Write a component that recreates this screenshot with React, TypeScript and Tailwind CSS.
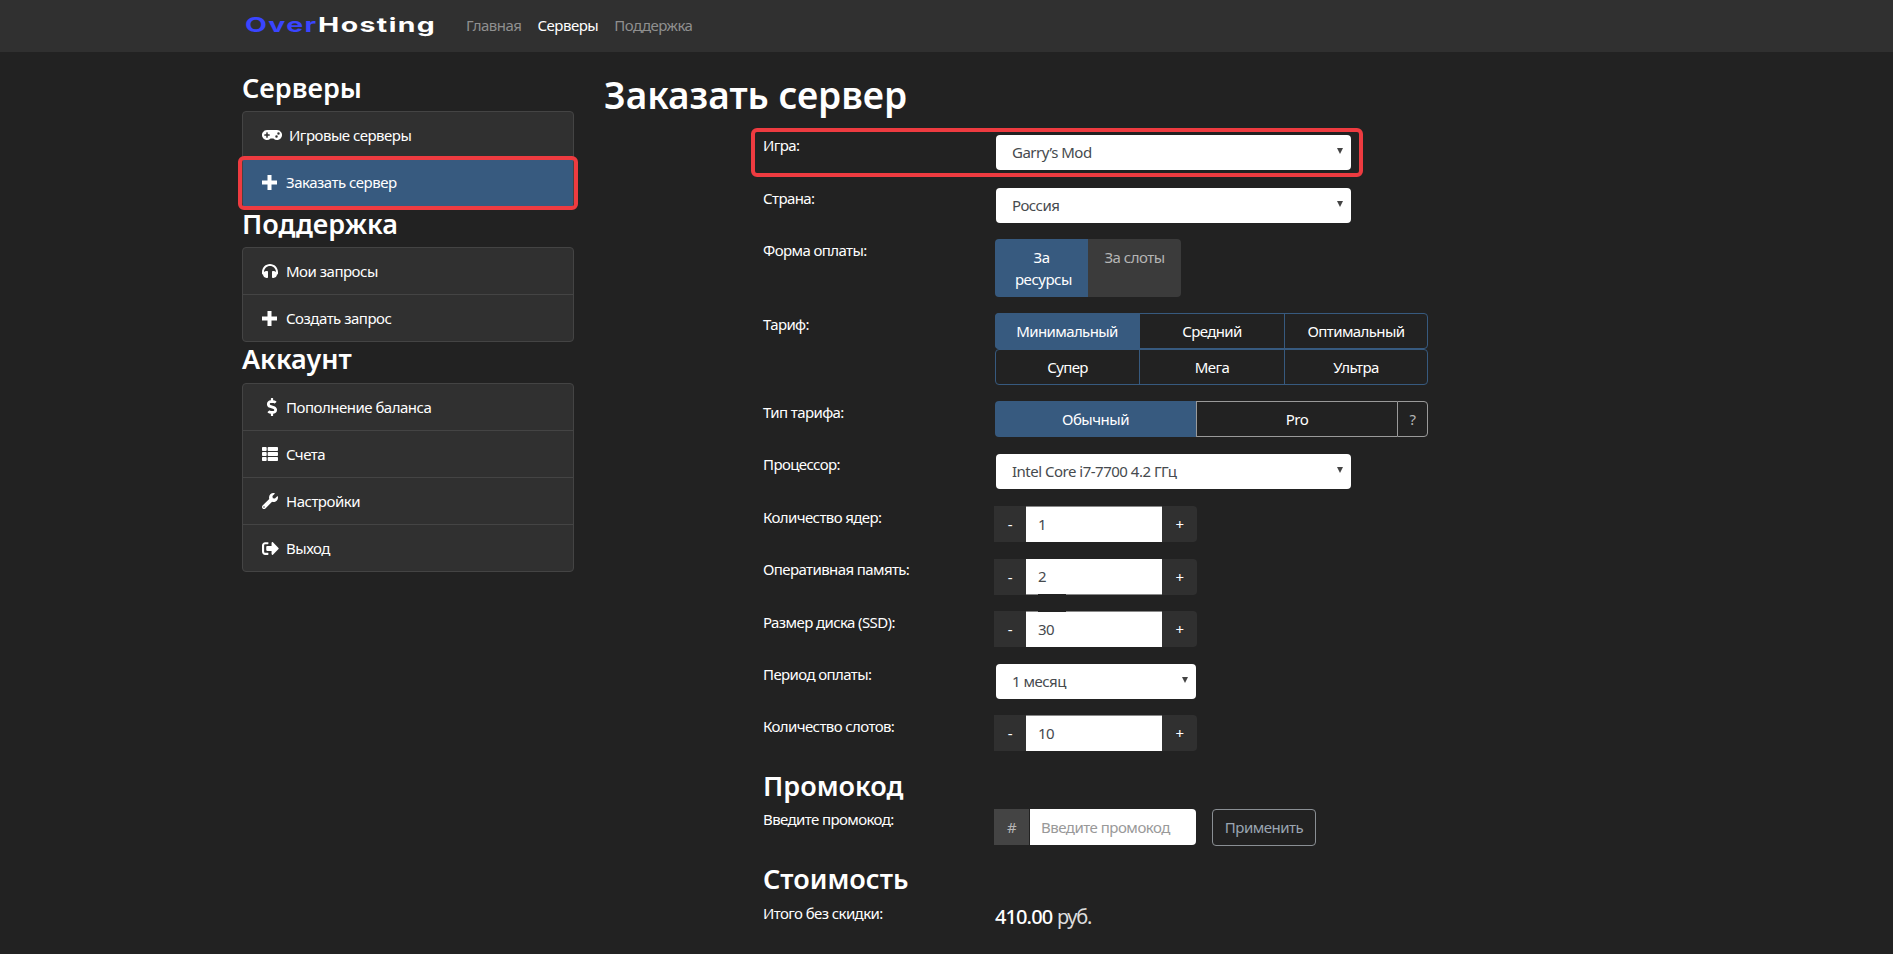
import type { ReactNode } from "react";
import { FaDollarSign, FaGamepad, FaHeadphones, FaSignOutAlt, FaThList, FaWrench } from "react-icons/fa";

const font = "font-['Noto_Sans',sans-serif]";

function PlusIcon() {
  return (
    <svg viewBox="0 0 15 15" className="h-[15px] w-[15px] fill-white">
      <path d="M5.5 0h4v5.5H15v4H9.5V15h-4V9.5H0v-4h5.5z" />
    </svg>
  );
}

const groups = [
  {
    title: "Серверы",
    heading: "h-[40px]",
    items: [
      { label: "Игровые серверы", icon: <FaGamepad className="h-[20px] w-[20px]" />, wide: true },
      { label: "Заказать сервер", icon: <PlusIcon />, active: true },
    ],
  },
  {
    title: "Поддержка",
    heading: "h-[40px]",
    items: [
      { label: "Мои запросы", icon: <FaHeadphones className="h-[16px] w-[16px]" /> },
      { label: "Создать запрос", icon: <PlusIcon /> },
    ],
  },
  {
    title: "Аккаунт",
    heading: "h-[41px]",
    items: [
      { label: "Пополнение баланса", icon: <FaDollarSign className="ml-[1px] h-[18px] w-[18px]" /> },
      { label: "Счета", icon: <FaThList className="h-[16px] w-[16px]" /> },
      { label: "Настройки", icon: <FaWrench className="h-[16px] w-[16px]" /> },
      { label: "Выход", icon: <FaSignOutAlt className="h-[17px] w-[17px]" /> },
    ],
  },
];

function Sidebar() {
  return (
    <aside className="w-[332px] shrink-0 pt-[19px]">
      {groups.map((group) => (
        <div key={group.title}>
          <h4 className={`text-[27px] leading-[34px] font-semibold tracking-normal text-white ${group.heading}`}>{group.title}</h4>
          <div className="rounded border border-[#444] bg-[#303030]">
            {group.items.map((item, i) => (
              <a
                key={item.label}
                className={`relative flex items-center px-[19px] text-[15px] text-white ${
                  i > 0 ? "border-t border-[#444]" : ""
                } ${i === 0 ? "h-[46px]" : item.active ? "h-[48px] bg-[#375a7f]" : "h-[47px]"}`}
              >
                <span className={`flex ${item.wide ? "w-[27px]" : "w-[24px]"}`}>{item.icon}</span>
                {item.label}
                {item.active && (
                  <span className="absolute inset-x-[-5px] top-[-3px] bottom-[-4px] rounded-[6px] border-[4px] border-[#ee3b40]" />
                )}
              </a>
            ))}
          </div>
        </div>
      ))}
    </aside>
  );
}

function Row({
  label,
  className = "",
  labelClass = "",
  children,
}: {
  label: string;
  className?: string;
  labelClass?: string;
  children: ReactNode;
}) {
  return (
    <div className={`flex ${className}`}>
      <label className={`h-[22px] w-[232px] shrink-0 text-[15px] leading-[22px] tracking-[-0.6px] text-white ${labelClass}`}>
        {label}
      </label>
      {children}
    </div>
  );
}

function NativeSelect({ value, width }: { value: string; width: string }) {
  return (
    <div className={`relative ml-[1px] ${width}`}>
      <select
        defaultValue={value}
        className="h-[35px] w-full appearance-none rounded bg-white px-[16px] text-[15px] text-[#464a4e]"
      >
        <option>{value}</option>
      </select>
      <svg viewBox="0 0 6 6" className="absolute top-[13px] right-[8px] h-[6px] w-[6px] fill-[#444]">
        <path d="M0 0h6L3 6z" />
      </svg>
    </div>
  );
}

function Spinner({ value, border = "border-t", notch = "" }: { value: string; border?: string; notch?: string }) {
  return (
    <div className="relative ml-[-1px] flex h-[36px] w-[203px] overflow-hidden rounded-r bg-[#303030] text-[15px] text-white">
      <span className="flex w-[32px] items-center justify-center">-</span>
      <input
        defaultValue={value}
        className={`w-[136px] border-[#888] bg-white px-[12px] text-[15px] text-[#464a4e] ${border}`}
      />
      <span className="flex w-[35px] items-center justify-center">+</span>
      {notch && <span className={`absolute left-[44px] h-[1px] w-[28px] bg-[#222] ${notch}`} />}
    </div>
  );
}

function Tariffs() {
  const rows = [
    ["Минимальный", "Средний", "Оптимальный"],
    ["Супер", "Мега", "Ультра"],
  ];
  return (
    <div className="w-[434px]">
      {rows.map((row, r) => (
        <div key={r} className="grid h-[36px] grid-cols-[143px_145px_1fr] rounded border border-[#375a7f]">
          {row.map((name, i) => (
            <span
              key={name}
              className={`flex items-center justify-center text-[15px] tracking-[-0.6px] text-white ${
                i > 0 ? "border-l border-[#375a7f]" : ""
              } ${name === "Минимальный" ? "m-[-1px] mr-0 rounded-l bg-[#375a7f]" : ""}`}
            >
              {name}
            </span>
          ))}
        </div>
      ))}
    </div>
  );
}

export default function App() {
  return (
    <div className={`h-[954px] overflow-hidden bg-[#222] tracking-[-0.5px] ${font}`}>
      <nav className="flex h-[52px] items-center bg-[#303030] pb-[2px] pl-[245px]">
        <span className="mr-[31px] w-[190px] font-['Inter',sans-serif] text-[20px] leading-none font-bold tracking-[1px] whitespace-nowrap">
          <span className="inline-block origin-left scale-x-[1.42]">
            <span className="text-[#3a45ff]">Over</span>
            <span className="text-white">Hosting</span>
          </span>
        </span>
        <div className="flex gap-[16px] text-[15px]">
          <a className="text-[#8f8f8f]">Главная</a>
          <a className="text-white">Серверы</a>
          <a className="text-[#8f8f8f]">Поддержка</a>
        </div>
      </nav>

      <div className="flex pl-[242px]">
        <Sidebar />
        <main className="ml-[30px] flex-1">
          <h1 className="mt-[16px] h-[67px] text-[37px] leading-[54px] font-semibold tracking-normal text-white">
            Заказать сервер
          </h1>
          <form className="ml-[159px] w-[665px]">
            <Row label="Игра:" labelClass="mt-[-1px]" className="relative mb-[18px]">
              <NativeSelect value="Garry’s Mod" width="w-[355px]" />
              <span className="absolute top-[-7px] right-[65px] left-[-12px] bottom-[-7px] rounded-[6px] border-[4px] border-[#ee3b40]" />
            </Row>
            <Row label="Страна:" labelClass="mt-[-1px]" className="mb-[16px]">
              <NativeSelect value="Россия" width="w-[355px]" />
            </Row>
            <Row label="Форма оплаты:" className="mb-[16px]">
              <div className="flex h-[58px] w-[186px] overflow-hidden rounded text-center text-[15px] leading-[22px]">
                <span className="w-[93px] bg-[#375a7f] px-[20px] pt-[7px] text-white">За ресурсы</span>
                <span className="w-[93px] bg-[#3b3b3b] pt-[7px] text-[#b5b5b5]">За слоты</span>
              </div>
            </Row>
            <Row label="Тариф:" className="mb-[16px]">
              <Tariffs />
            </Row>
            <Row label="Тип тарифа:" className="mb-[17px]">
              <div className="flex h-[36px] w-[434px] text-[15px] text-white">
                <span className="flex w-[201px] items-center justify-center rounded-l bg-[#375a7f]">Обычный</span>
                <span className="flex w-[201px] items-center justify-center border-y border-l border-[#9a9a9a]">Pro</span>
                <span className="flex flex-1 items-center justify-center rounded-r border border-[#9a9a9a] text-[#b5b5b5]">?</span>
              </div>
            </Row>
            <Row label="Процессор:" labelClass="mt-[-1px]" className="mb-[17px]">
              <NativeSelect value="Intel Core i7-7700 4.2 ГГц" width="w-[355px]" />
            </Row>
            <Row label="Количество ядер:" className="mb-[17px]">
              <Spinner value="1" />
            </Row>
            <Row label="Оперативная память:" labelClass="mt-[-1px]" className="mb-[16px]">
              <Spinner value="2" border="border-b" notch="bottom-0" />
            </Row>
            <Row label="Размер диска (SSD):" className="mb-[17px]">
              <Spinner value="30" notch="top-0" />
            </Row>
            <Row label="Период оплаты:" labelClass="mt-[-1px]" className="mb-[16px]">
              <NativeSelect value="1 месяц" width="w-[200px]" />
            </Row>
            <Row label="Количество слотов:">
              <Spinner value="10" />
            </Row>

            <h3 className="mt-[18px] h-[40px] text-[27px] leading-[34px] font-semibold tracking-normal text-white">Промокод</h3>
            <Row label="Введите промокод:" labelClass="mt-[-1px]">
              <div className="ml-[-1px] flex h-[36px] w-[202px] text-[15px]">
                <span className="flex w-[35px] items-center justify-center bg-[#444] text-[#b5b5b5]">#</span>
                <input
                  placeholder="Введите промокод"
                  className="ml-[1px] w-[166px] rounded-r bg-white px-[11px] text-[15px] placeholder:text-[#999]"
                />
              </div>
              <button
                type="button"
                className="ml-[16px] h-[37px] w-[104px] rounded border border-[#8a8f94] text-[15px] text-[#9aa5b1]"
              >
                Применить
              </button>
            </Row>

            <h3 className="mt-[16px] h-[40px] text-[27px] leading-[34px] font-semibold tracking-normal text-white">Стоимость</h3>
            <Row label="Итого без скидки:">
              <span className="mt-[1px] text-[20px] leading-[28px] text-white">
                <span className="font-medium tracking-[-0.9px]">410.00</span>{" "}
                <span className="tracking-[-1.2px] text-[#ddd]">руб.</span>
              </span>
            </Row>
          </form>
        </main>
      </div>
    </div>
  );
}
